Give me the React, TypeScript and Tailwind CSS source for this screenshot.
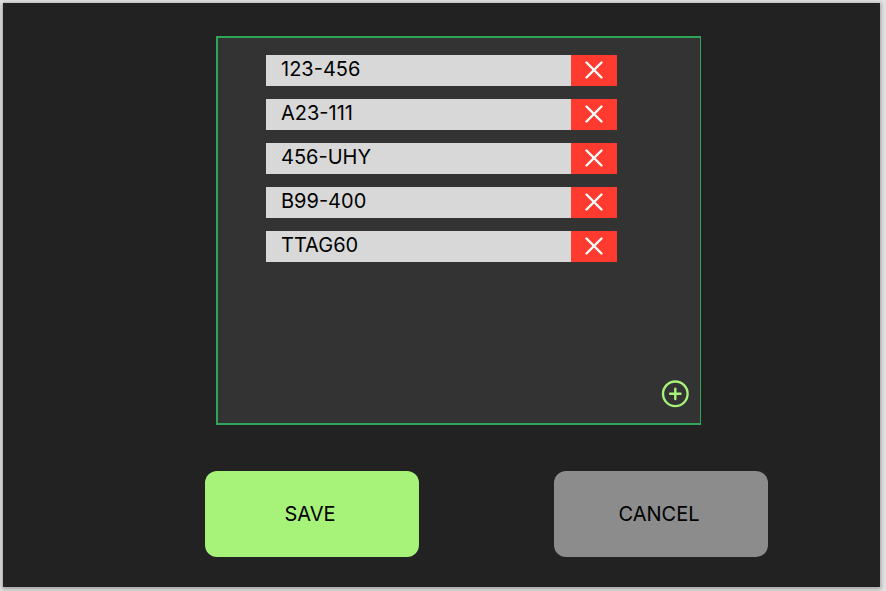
import { useState } from "react";

const initialTags = ["123-456", "A23-111", "456-UHY", "B99-400", "TTAG60"];

function CrossIcon() {
  return (
    <svg
      width="18"
      height="18"
      viewBox="0 0 18 18"
      fill="none"
      stroke="white"
      strokeWidth="2.4"
      strokeLinecap="round"
      aria-hidden="true"
    >
      <path d="M1.5 1.5 16.5 16.5M16.5 1.5 1.5 16.5" />
    </svg>
  );
}

function PlusCircleIcon() {
  return (
    <svg
      width="28"
      height="28"
      viewBox="0 0 28 28"
      fill="none"
      stroke="#a7f279"
      strokeWidth="2.4"
      strokeLinecap="round"
      aria-hidden="true"
    >
      <circle cx="14.3" cy="13.8" r="12.3" />
      <path d="M14.3 8.6v10.4M9.1 13.8h10.4" />
    </svg>
  );
}

function TagRow({ tag, onRemove }: { tag: string; onRemove: () => void }) {
  return (
    <li className="flex h-[31px] bg-[#d8d8d8]">
      <span className="flex-1 pl-[15px] text-xl leading-7 text-black">{tag}</span>
      <button
        type="button"
        aria-label={`Remove ${tag}`}
        onClick={onRemove}
        className="flex w-[46px] items-center justify-center bg-[#ff3b30] pb-px"
      >
        <CrossIcon />
      </button>
    </li>
  );
}

export default function App() {
  const [tags, setTags] = useState(initialTags);

  return (
    <div className="flex min-h-screen flex-col bg-[#e2e2e2] pt-[3px] pr-[6px] pb-1 pl-[3px] font-['Inter',sans-serif]">
      <main className="flex flex-1 flex-col bg-[#222222] pt-[33px] pb-[30px] shadow-[0_1px_4px_1px_rgba(0,0,0,0.3)]">
        <div className="flex flex-1 pr-[179px] pl-[213px]">
          <section
            aria-label="Tags"
            className="flex flex-1 flex-col justify-between border-2 border-r border-[#30a457] bg-[#333333] pt-[17px] pb-[15px]"
          >
            <ul className="flex flex-col gap-[13px] pr-[83px] pl-12">
              {tags.map((tag) => (
                <TagRow
                  key={tag}
                  tag={tag}
                  onRemove={() => setTags(tags.filter((t) => t !== tag))}
                />
              ))}
            </ul>
            <div className="flex justify-end pr-[11px]">
              <button type="button" aria-label="Add tag">
                <PlusCircleIcon />
              </button>
            </div>
          </section>
        </div>
        <div className="mt-[46px] flex justify-between pr-[112px] pl-[202px]">
          <button
            type="button"
            className="h-[86px] w-[214px] rounded-xl bg-[#a7f279] pr-1 text-xl text-black"
          >
            SAVE
          </button>
          <button
            type="button"
            className="h-[86px] w-[214px] rounded-xl bg-[#8c8c8c] pr-1 text-xl text-black"
          >
            CANCEL
          </button>
        </div>
      </main>
    </div>
  );
}
